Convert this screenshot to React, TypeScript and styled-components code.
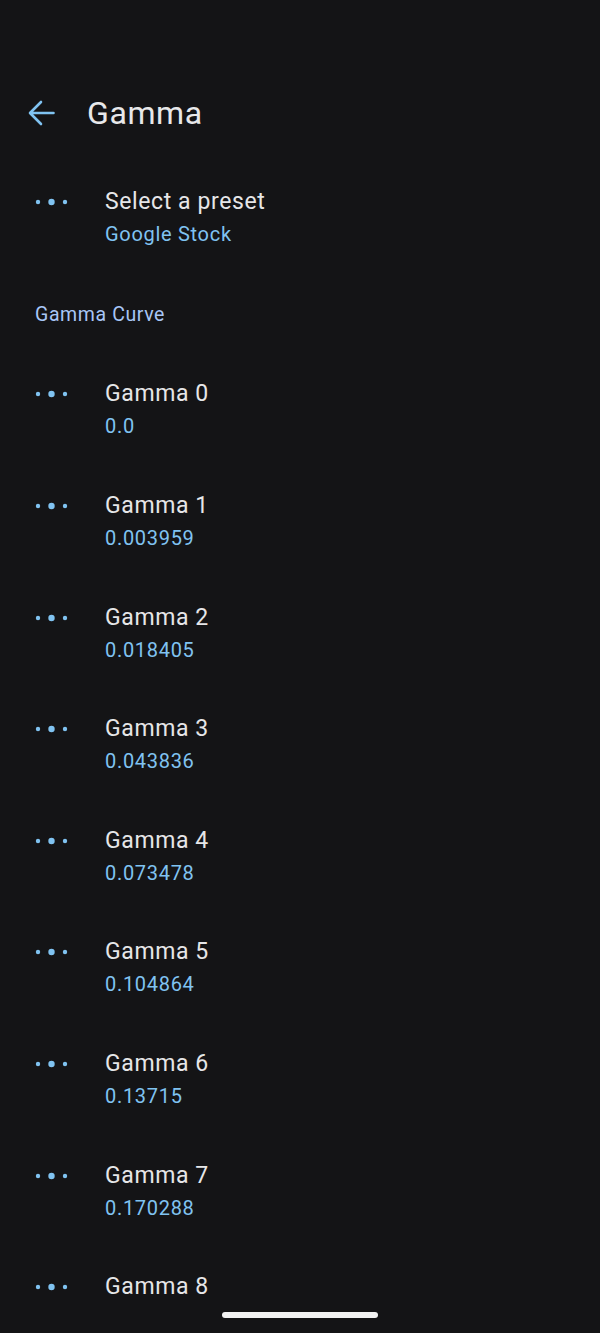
import React from "react";
import styled, { createGlobalStyle } from "styled-components";

const GlobalStyle = createGlobalStyle`
  html, body {
    margin: 0;
    padding: 0;
    background: #141416;
    font-family: Roboto, "Noto Sans", sans-serif;
  }
`;

const Screen = styled.div`
  position: relative;
  width: 600px;
  height: 1333px;
  overflow: hidden;
  background: #141416;
`;

const Header = styled.div`
  display: flex;
  align-items: center;
  height: 98px;
  margin-top: 64px;
  padding-left: 28px;
  gap: 32px;
`;

const Title = styled.h1`
  margin: 0;
  font-size: 32px;
  font-weight: 400;
  letter-spacing: 0.6px;
  color: #e8e8ea;
`;

const Row = styled.div`
  display: flex;
  align-items: center;
  height: 111.6px;
  padding-left: 33px;
`;

const IconSlot = styled.div`
  width: 72px;
  display: flex;
  align-items: center;
  margin-top: -32px;
`;

const Texts = styled.div`
  display: flex;
  flex-direction: column;
  gap: 4px;
`;

const RowTitle = styled.div`
  font-size: 23px;
  line-height: 28px;
  letter-spacing: 0.6px;
  color: #e6e6e8;
`;

const RowValue = styled.div`
  font-size: 20px;
  line-height: 28px;
  letter-spacing: 0.7px;
  color: #80c3f1;
`;

const Category = styled.div`
  height: 81px;
  display: flex;
  align-items: center;
  padding-left: 35px;
  font-size: 19.5px;
  letter-spacing: 0.6px;
  color: #a8c6f6;
`;

const NavArea = styled.div`
  position: absolute;
  left: 0;
  right: 0;
  bottom: 0;
  height: 31px;
  background: #141416;
  display: flex;
  justify-content: center;
`;

const HomeBar = styled.div`
  margin-top: 10px;
  width: 156px;
  height: 6px;
  border-radius: 3px;
  background: #f2f2f2;
`;

const BackArrow = () => (
  <svg width="27" height="26" viewBox="0 0 27 26" fill="none">
    <path
      d="M25.5 13H2.5M13 2L2 13l11 11"
      stroke="#80c3f1"
      strokeWidth="2.6"
      strokeLinecap="round"
      strokeLinejoin="round"
    />
  </svg>
);

const Dots = () => (
  <svg width="38" height="10" viewBox="0 0 38 10">
    <circle cx="5" cy="5" r="2.2" fill="#80c3f1" />
    <circle cx="18.5" cy="5" r="3.2" fill="#80c3f1" />
    <circle cx="32" cy="5" r="2.2" fill="#80c3f1" />
  </svg>
);

const gammas = [
  "0.0",
  "0.003959",
  "0.018405",
  "0.043836",
  "0.073478",
  "0.104864",
  "0.13715",
  "0.170288",
  "0.204",
];

function SettingRow({ title, value }: { title: string; value: string }) {
  return (
    <Row>
      <IconSlot>
        <Dots />
      </IconSlot>
      <Texts>
        <RowTitle>{title}</RowTitle>
        <RowValue>{value}</RowValue>
      </Texts>
    </Row>
  );
}

export default function App() {
  return (
    <Screen>
      <GlobalStyle />
      <Header>
        <BackArrow />
        <Title>Gamma</Title>
      </Header>
      <SettingRow title="Select a preset" value="Google Stock" />
      <Category>Gamma Curve</Category>
      {gammas.map((v, i) => (
        <SettingRow key={i} title={`Gamma ${i}`} value={v} />
      ))}
      <NavArea>
        <HomeBar />
      </NavArea>
    </Screen>
  );
}
